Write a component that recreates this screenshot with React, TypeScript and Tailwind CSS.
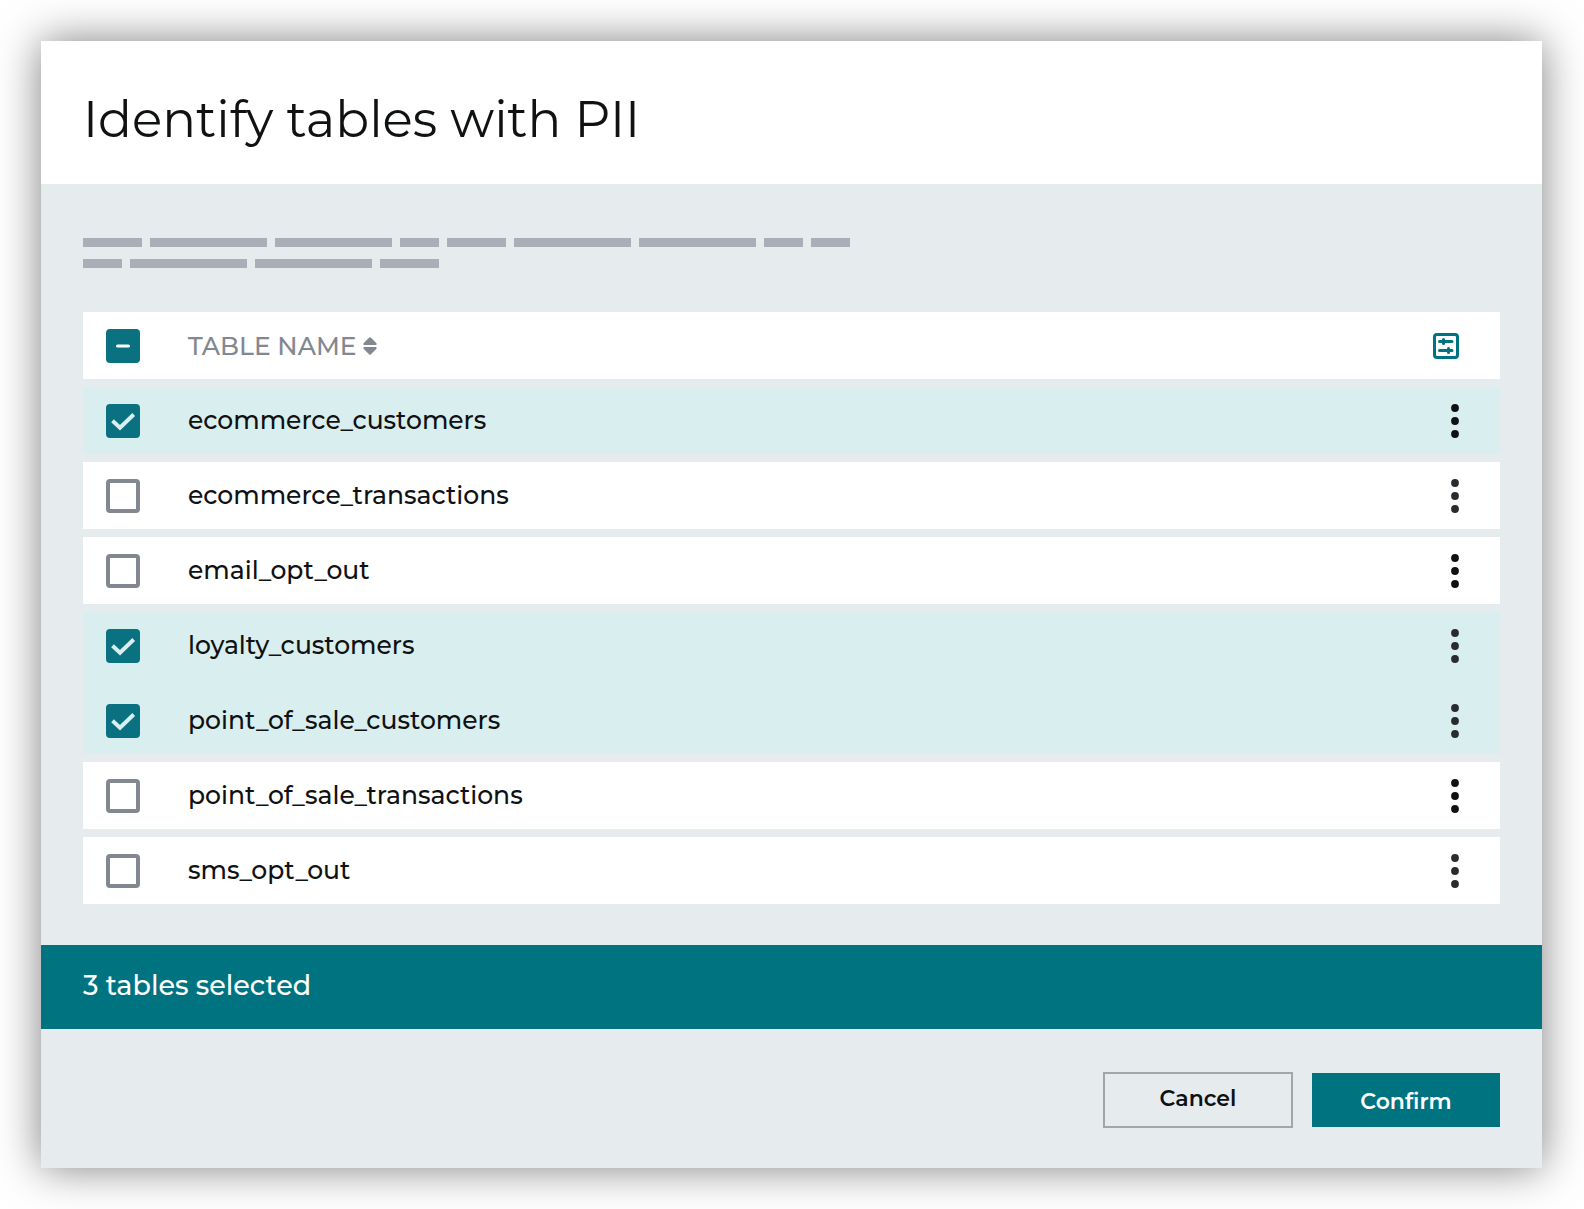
import { useEffect, useRef, useState } from "react";

type Row = { name: string; selected: boolean; dots: string };

const initialRows: Row[] = [
  { name: "ecommerce_customers", selected: true, dots: "text-[#0f1112]" },
  { name: "ecommerce_transactions", selected: false, dots: "text-[#292c2f]" },
  { name: "email_opt_out", selected: false, dots: "text-[#0f1112]" },
  { name: "loyalty_customers", selected: true, dots: "text-[#292c2f]" },
  { name: "point_of_sale_customers", selected: true, dots: "text-[#292c2f]" },
  { name: "point_of_sale_transactions", selected: false, dots: "text-[#0f1112]" },
  { name: "sms_opt_out", selected: false, dots: "text-[#292c2f]" },
];

function Bars({ widths }: { widths: string[] }) {
  return (
    <div className="flex gap-2">
      {widths.map((w, i) => (
        <span key={i} className={`h-[9px] bg-[#a9aeb7] ${w}`} />
      ))}
    </div>
  );
}

function Checkbox({
  checked,
  mixed = false,
  label,
  id,
  onChange,
}: {
  checked: boolean;
  mixed?: boolean;
  label?: string;
  id: string;
  onChange: () => void;
}) {
  const ref = useRef<HTMLInputElement>(null);
  useEffect(() => {
    if (ref.current) ref.current.indeterminate = mixed;
  }, [mixed]);
  return (
    <span className="relative block size-[34px]">
      <input
        ref={ref}
        id={id}
        type="checkbox"
        aria-label={label}
        checked={checked}
        onChange={onChange}
        className="block size-[34px] cursor-pointer appearance-none rounded-[4px] border-4 border-[#838890] bg-white checked:border-[#0a7180] checked:bg-[#0a7180] indeterminate:border-[#0a7180] indeterminate:bg-[#0a7180]"
      />
      {(checked || mixed) && (
        <svg viewBox="0 0 34 34" className="pointer-events-none absolute inset-0 size-[34px]" fill="none" aria-hidden="true">
          {mixed ? (
            <path d="M11.5 17h11" stroke="#fff" strokeWidth="3" strokeLinecap="round" />
          ) : (
            <path d="M6.500 16.800L14 23.700L27.700 10.500" stroke="#d9eeee" strokeWidth="4" />
          )}
        </svg>
      )}
    </span>
  );
}

export default function App() {
  const [rows, setRows] = useState(initialRows);
  const count = rows.filter((r) => r.selected).length;
  const all = count === rows.length;
  const toggle = (i: number) =>
    setRows(rows.map((r, j) => (j === i ? { ...r, selected: !r.selected } : r)));

  return (
    <main className="min-h-screen bg-white py-[41px] pr-[42px] pl-[41px] font-[Montserrat,Inter,sans-serif] text-[#0f1112]">
      <section className="bg-[#e6ecee] shadow-[0_0_41px_rgba(0,0,0,0.5)]">
        <header className="bg-white px-[42px] pt-[47px] pb-8">
          <h1 className="text-[50px] leading-[64px] font-normal">Identify tables with PII</h1>
        </header>

        <div className="px-[42px] pt-[54px] pb-[33px]">
          <div className="flex flex-col gap-3 pb-11">
            <Bars widths={["w-[59px]", "w-[117px]", "w-[117px]", "w-[39px]", "w-[59px]", "w-[117px]", "w-[117px]", "w-[39px]", "w-[39px]"]} />
            <Bars widths={["w-[39px]", "w-[117px]", "w-[117px]", "w-[59px]"]} />
          </div>

          <table className="w-full border-separate border-spacing-0 text-left">
            <thead>
              <tr>
                <th className="h-[75px] w-[105px] border-b-8 border-transparent bg-white bg-clip-padding p-0 pl-[23px]">
                  <Checkbox
                    id="all"
                    label="Select all tables"
                    checked={all}
                    mixed={count > 0 && !all}
                    onChange={() => setRows(rows.map((r) => ({ ...r, selected: !all })))}
                  />
                </th>
                <th className="border-b-8 border-transparent bg-white bg-clip-padding p-0">
                  <button type="button" className="flex items-center gap-1.5 text-[25px] leading-8 font-medium text-[#838890]">
                    TABLE NAME
                    <svg viewBox="0 0 14 18" className="h-[18px] w-[14px]" fill="currentColor" aria-hidden="true">
                      <path d="M6 .7a1.4 1.4 0 0 1 2 0l5.200 5.200c.9.9.4 2.100-.8 2.100H1.600C.4 8-.1 6.800.8 5.900zM6 17.300a1.400 1.400 0 0 0 2 0l5.200-5.200c.9-.9.4-2.100-.8-2.100H1.600C.4 10-.1 11.200.8 12.100z" />
                    </svg>
                  </button>
                </th>
                <th className="border-b-8 border-transparent bg-white bg-clip-padding p-0 pr-[41px]">
                  <button type="button" aria-label="Table settings" className="ml-auto block text-[#007381]">
                    <svg viewBox="0 0 26 26" className="size-[26px]" fill="none" stroke="currentColor" aria-hidden="true">
                      <rect x="1.500" y="1.500" width="23" height="23" rx="2.500" strokeWidth="3" />
                      <path d="M6.500 8.500h12.500M6.500 17.500h12.500" strokeWidth="3" strokeLinecap="round" />
                      <path d="M10.500 6.500v4M15.500 15.500v4" strokeWidth="3" strokeLinecap="round" />
                    </svg>
                  </button>
                </th>
              </tr>
            </thead>
            <tbody>
              {rows.map((row, i) => {
                const joined = row.selected && rows[i + 1]?.selected;
                const fill = `${row.selected ? "bg-[#d9eeee]" : "bg-white"} ${joined ? "bg-clip-border" : "bg-clip-padding"} border-b-8 border-transparent p-0`;
                return (
                  <tr key={row.name}>
                    <td className={`h-[75px] pl-[23px]! ${fill}`}>
                      <Checkbox id={row.name} checked={row.selected} onChange={() => toggle(i)} />
                    </td>
                    <td className={fill}>
                      <label htmlFor={row.name} className="block cursor-pointer pb-0.5 text-[25px] leading-8 font-medium">
                        {row.name}
                      </label>
                    </td>
                    <td className={`pr-[41px]! ${fill}`}>
                      <button type="button" aria-label={`Actions for ${row.name}`} className={`ml-auto block ${row.dots}`}>
                        <svg viewBox="0 0 8 34" className="h-[34px] w-2" fill="currentColor" aria-hidden="true">
                          <circle cx="4" cy="4" r="3.900" />
                          <circle cx="4" cy="17" r="3.900" />
                          <circle cx="4" cy="30" r="3.900" />
                        </svg>
                      </button>
                    </td>
                  </tr>
                );
              })}
            </tbody>
          </table>
        </div>

        <div className="flex h-[84px] items-center bg-[#007381] px-[42px] pb-0.5 text-[27px] leading-8 font-medium text-white">
          {count} tables selected
        </div>

        <footer className="flex justify-end gap-[19px] px-[42px] pt-[43px] pb-10">
          <button type="button" className="h-14 w-[190px] border-2 border-[#a3a6a7] pb-0.5 text-[22px] leading-7 font-semibold">
            Cancel
          </button>
          <button type="button" className="my-px h-[54px] w-[188px] bg-[#007381] pt-1 text-[22px] leading-7 font-semibold text-white [font-variant-ligatures:none]">
            Confirm
          </button>
        </footer>
      </section>
    </main>
  );
}
